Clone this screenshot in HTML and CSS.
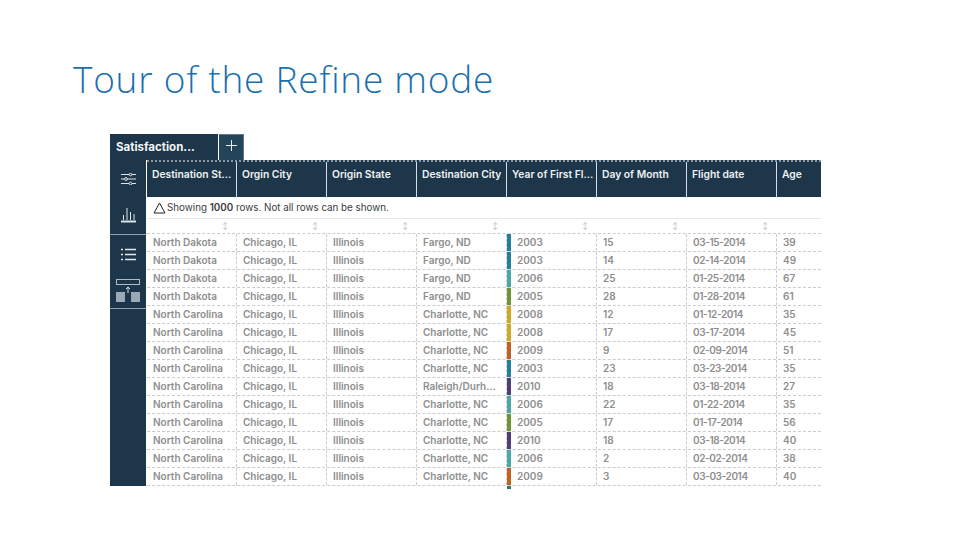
FILE: index.html
```html
<!DOCTYPE html>
<html lang="en">
<head>
    <meta charset="UTF-8">
    <title>Tour of the Refine mode</title>
    <link rel="stylesheet" href="styles.css">
</head>
<body>
    <h1 class="slide-title">Tour of the Refine mode</h1>
    <div class="shot">
        <div class="tabs">
            <div class="tab">Satisfaction...</div>
            <div class="tab-add">
                <svg width="11" height="11" viewBox="0 0 11 11" fill="none" stroke="#e8edf0" stroke-width="1"><path d="M5.5 0v11M0 5.5h11"/></svg>
            </div>
        </div>
        <div class="main">
            <div class="rail">
                <div class="rail-group">
                    <div class="rail-btn">
                        <svg width="15" height="12" viewBox="0 0 15 12" fill="none" stroke="#dfe5e9" stroke-width="1"><path d="M0 1.5h15M0 6h15M0 10.5h15"/><circle cx="9.5" cy="1.5" r="1.4" fill="#1d3649"/><circle cx="5" cy="6" r="1.4" fill="#1d3649"/><circle cx="9.5" cy="10.5" r="1.4" fill="#1d3649"/></svg>
                    </div>
                    <div class="rail-btn">
                        <svg width="15" height="15" viewBox="0 0 15 15" fill="none" stroke="#dfe5e9" stroke-width="1"><path d="M2.5 12V7M6 12V0M9.5 12V4M13 12V6"/><path d="M0 13.5h15" stroke-width="2"/></svg>
                    </div>
                </div>
                <div class="rail-group">
                    <div class="rail-btn">
                        <svg width="15" height="13" viewBox="0 0 15 13" fill="none" stroke="#e6ebee" stroke-width="1.6"><path d="M4 1.5h11M4 6.5h11M4 11.5h11M0 1.5h2M0 6.5h2M0 11.5h2"/></svg>
                    </div>
                    <div class="rail-btn">
                        <svg width="24" height="23" viewBox="0 0 24 23" fill="none"><rect x="0.5" y="0.5" width="23" height="5" stroke="#aebbc5"/><path d="M12 14V8M10 10l2-2 2 2" stroke="#dfe5e9"/><rect x="0" y="13" width="9" height="10" fill="#9aa9b4"/><rect x="15" y="13" width="9" height="10" fill="#9aa9b4"/></svg>
                    </div>
                </div>
            </div>
            <div class="sheet">
                <div class="head-row" id="headRow"></div>
                <div class="notice">
                    <svg width="13" height="12" viewBox="0 0 13 12" fill="none" stroke="#222"><path d="M6.5 1L12 11H1z"/></svg>
                    <span>Showing <b>1000</b> rows. Not all rows can be shown.</span>
                </div>
                <div class="sort-row" id="sortRow"></div>
                <div id="rows"></div>
            </div>
        </div>
    </div>
    <script src="table.js"></script>
</body>
</html>
```

FILE: styles.css
```css
body {
    margin: 0;
    width: 960px;
    height: 540px;
    overflow: hidden;
    background-color: #fff;
    font-family: "Open Sans", sans-serif;
}
.slide-title {
    margin: 0;
    padding: 54px 0 0 73px;
    height: 79px;
    box-sizing: border-box;
    font-family: "Open Sans", sans-serif;
    font-size: 37px;
    font-weight: 300;
    line-height: 50px;
    color: #1a6fae;
    letter-spacing: 0.75px;
}
.shot {
    margin: 55px 0 0 110px;
    width: 711px;
    font-family: "Inter", sans-serif;
}
.tabs {
    display: flex;
    height: 26px;
}
.tab {
    width: 108px;
    background-color: #1d3649;
    color: #f2f4f5;
    font-size: 11.5px;
    font-weight: 700;
    line-height: 27px;
    padding-left: 6px;
    box-sizing: border-box;
}
.tab-add {
    width: 25px;
    margin-left: 1px;
    background-color: #24445a;
    border-top: 1px solid #5d7a8d;
    border-right: 1px solid #5d7a8d;
    box-sizing: border-box;
    display: flex;
    justify-content: center;
    padding-top: 5px;
}
.main {
    display: flex;
    height: 326px;
}
.rail {
    width: 36px;
    background-color: #1d3649;
    flex-shrink: 0;
}
.rail-group {
    border-bottom: 1px solid #90a2af;
    padding-top: 1px;
}
.rail-btn {
    height: 36px;
    display: flex;
    align-items: center;
    justify-content: center;
}
.rail-group:first-child .rail-btn {
    height: 36.5px;
}
.sheet {
    flex: 1;
    min-width: 0;
    border-left: 1px solid #fff;
}
.head-row {
    display: flex;
    height: 37px;
    background-color: #1d3649;
    border-top: 2px dotted #8b9aa5;
    box-sizing: border-box;
}
.head-cell {
    box-sizing: border-box;
    color: #eef1f3;
    font-size: 10.3px;
    font-weight: 600;
    line-height: 25px;
    padding-left: 5px;
    border-right: 1px solid #d5dee4;
    white-space: nowrap;
    overflow: hidden;
}
.head-cell:last-child {
    border-right: none;
}
.col-0 { width: 90px; }
.col-1 { width: 90px; }
.col-2 { width: 90px; }
.col-3 { width: 90px; }
.col-4 { width: 90px; }
.col-5 { width: 90px; }
.col-6 { width: 90px; }
.col-7 { width: 44px; }
.notice {
    height: 22px;
    display: flex;
    align-items: center;
    gap: 1px;
    padding-left: 6px;
    font-size: 9.8px;
    color: #3c3c3c;
    border-bottom: 1px solid #e8e8e8;
    box-sizing: border-box;
}
.notice b {
    font-weight: 600;
}
.sort-row {
    display: flex;
    height: 14px;
}
.sort-cell {
    box-sizing: border-box;
    text-align: right;
    padding-right: 9px;
    color: #b9b9b9;
    font-size: 7px;
    line-height: 14px;
}
.row {
    display: flex;
    height: 18px;
    border-top: 1px dashed #cccccc;
    box-sizing: border-box;
}
.cell {
    box-sizing: border-box;
    padding-left: 6px;
    font-size: 10px;
    font-weight: 600;
    line-height: 17px;
    color: #8e8e8e;
    border-right: 1px dashed #cccccc;
    white-space: nowrap;
    overflow: hidden;
}
.cell:last-child {
    border-right: none;
}
.cell.col-6 {
    letter-spacing: -0.4px;
}
.cell-year {
    padding-left: 6px;
    border-left: 4px solid transparent;
}
.row-tail {
    height: 3px;
    border-top: 1px dashed #cccccc;
    display: flex;
}
.tail-mark {
    margin-left: 360px;
    width: 4px;
    background-color: #2c7a72;
}
```

FILE: table.js
```js
const headers = ["Destination St...", "Orgin City", "Origin State", "Destination City", "Year of First Fl...", "Day of Month", "Flight date", "Age"];

const data = [
    ["North Dakota", "Fargo, ND", "2003", "15", "03-15-2014", "39", "#237f9c"],
    ["North Dakota", "Fargo, ND", "2003", "14", "02-14-2014", "49", "#237f9c"],
    ["North Dakota", "Fargo, ND", "2006", "25", "01-25-2014", "67", "#4aa8a8"],
    ["North Dakota", "Fargo, ND", "2005", "28", "01-28-2014", "61", "#6f9438"],
    ["North Carolina", "Charlotte, NC", "2008", "12", "01-12-2014", "35", "#d0aa25"],
    ["North Carolina", "Charlotte, NC", "2008", "17", "03-17-2014", "45", "#d0aa25"],
    ["North Carolina", "Charlotte, NC", "2009", "9", "02-09-2014", "51", "#bf6420"],
    ["North Carolina", "Charlotte, NC", "2003", "23", "03-23-2014", "35", "#237f9c"],
    ["North Carolina", "Raleigh/Durh...", "2010", "18", "03-18-2014", "27", "#4f3f78"],
    ["North Carolina", "Charlotte, NC", "2006", "22", "01-22-2014", "35", "#4aa8a8"],
    ["North Carolina", "Charlotte, NC", "2005", "17", "01-17-2014", "56", "#6f9438"],
    ["North Carolina", "Charlotte, NC", "2010", "18", "03-18-2014", "40", "#4f3f78"],
    ["North Carolina", "Charlotte, NC", "2006", "2", "02-02-2014", "38", "#4aa8a8"],
    ["North Carolina", "Charlotte, NC", "2009", "3", "03-03-2014", "40", "#bf6420"]
];

const headRow = document.getElementById("headRow");
const sortRow = document.getElementById("sortRow");
const rows = document.getElementById("rows");

headers.forEach((title, index) => {
    const cell = document.createElement("div");
    cell.className = `head-cell col-${index}`;
    cell.textContent = title;
    headRow.appendChild(cell);

    const sort = document.createElement("div");
    sort.className = `sort-cell col-${index}`;
    sort.textContent = index < 7 ? "\u2195" : "";
    sortRow.appendChild(sort);
});

data.forEach((item) => {
    const row = document.createElement("div");
    row.className = "row";
    const values = [item[0], "Chicago, IL", "Illinois", item[1], item[2], item[3], item[4], item[5]];
    values.forEach((value, index) => {
        const cell = document.createElement("div");
        cell.className = `cell col-${index}`;
        if (index === 4) {
            cell.classList.add("cell-year");
            cell.style.borderLeftColor = item[6];
        }
        cell.textContent = value;
        row.appendChild(cell);
    });
    rows.appendChild(row);
});

const tail = document.createElement("div");
tail.className = "row-tail";
tail.innerHTML = '<div class="tail-mark"></div>';
rows.appendChild(tail);
```
